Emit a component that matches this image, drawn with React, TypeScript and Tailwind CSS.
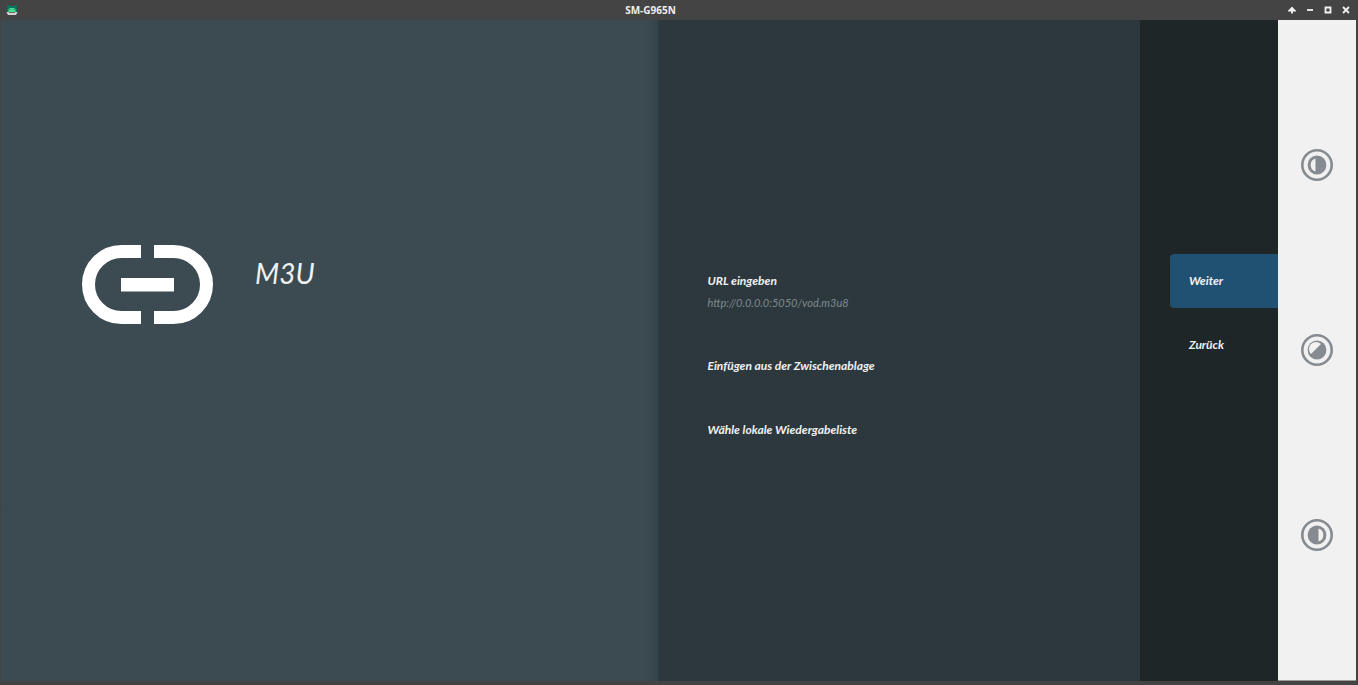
import type { ReactNode } from "react";

function Robot() {
  return (
    <svg viewBox="0 0 12 12" className="size-3 shrink-0" aria-hidden="true">
      <path d="M1 1h2l1 1h4l1-1h2v7H1z" fill="#0a7561" />
      <path d="M2.5 8V5.5L4 4h4l1.5 1.500V8z" fill="#48dd91" />
      <path d="M3.5 5h1v1h-1zM7.5 5h1v1h-1z" fill="#16845c" />
      <path d="M0.5 8h2l1 .8h5l1-.8h2l-1.500 3H2z" fill="#d3d3d3" />
    </svg>
  );
}

function LinkLogo() {
  return (
    <svg viewBox="0 0 131 79" className="h-[79px] w-[131px] shrink-0" fill="none" aria-hidden="true">
      <path d="M59 6.5H39.5a33 33 0 0 0 0 66H59M72 6.5h19.500a33 33 0 0 1 0 66H72" stroke="#fff" strokeWidth="13" />
      <path d="M39 33h53v13.500H39z" fill="#fff" />
    </svg>
  );
}

const titleButton = "flex h-5 w-[18px] items-center justify-center";

function WindowButton({ label, children }: { label: string; children: ReactNode }) {
  return (
    <button type="button" aria-label={label} className={titleButton}>
      <svg viewBox="0 0 8 8" className="size-2" fill="none" stroke="#f2f2f2" strokeWidth="1.800" aria-hidden="true">
        {children}
      </svg>
    </button>
  );
}

function DialButton({ label, light }: { label: string; light: string }) {
  return (
    <button type="button" aria-label={label} className="size-8 rounded-full">
      <svg viewBox="0 0 32 32" className="size-8" aria-hidden="true">
        <circle cx="16" cy="16" r="14.700" fill="none" stroke="#858b90" strokeWidth="2.600" />
        <circle cx="16" cy="16" r="9.400" fill="#858b90" />
        <path d={light} fill="#f1f1f1" />
      </svg>
    </button>
  );
}

const row = "flex flex-col justify-center text-left text-xs font-bold italic text-[#f0f2f2]";

export default function App() {
  return (
    <div className="flex h-screen min-h-[480px] flex-col bg-[#434343] font-['Lato','Noto_Sans',sans-serif]">
      <header className="flex h-5 shrink-0 items-center bg-[#444444] pl-1.5 pr-[3px]">
        <Robot />
        <h1 className="flex-1 text-center font-['Noto_Sans',sans-serif] text-[10px] leading-[18px] font-bold text-[#eeeeee]">
          SM-G965N
        </h1>
        <div className="flex">
          <WindowButton label="Keep above">
            <path d="M4 1v6.500M1.500 4.500L4 2l2.500 2.500z" fill="#f2f2f2" />
          </WindowButton>
          <WindowButton label="Minimize">
            <path d="M1 4h6" />
          </WindowButton>
          <WindowButton label="Maximize">
            <path d="M1.500 1.500h5v5h-5z" />
          </WindowButton>
          <WindowButton label="Close">
            <path d="M1 1l6 6M7 1L1 7" />
          </WindowButton>
        </div>
      </header>

      <div className="mr-0.5 mb-1 ml-px flex min-h-0 flex-1">
        <main className="grid min-w-0 flex-1 grid-cols-[656fr_482fr_138fr]">
          <section className="flex items-start gap-[42px] bg-linear-to-r from-[#3b4b51] from-98% to-[#35444a] pt-[225px] pl-[81px]">
            <LinkLogo />
            <h2 className="pt-3 text-[28px] leading-8 italic text-[#f0f2f2]">M3U</h2>
          </section>

          <section className="flex flex-col gap-2.5 bg-[#2c383e] pt-[234px] pl-[50px]">
            <button type="button" className={`${row} h-[75px] gap-1`}>
              <span className="leading-[18px]">URL eingeben</span>
              <span className="text-[11px] leading-[18px] font-normal text-[#7f898c]">http://0.0.0.0:5050/vod.m3u8</span>
            </button>
            <button type="button" className={`${row} h-[54px]`}>
              Einfügen aus der Zwischenablage
            </button>
            <button type="button" className={`${row} h-[54px]`}>
              Wähle lokale Wiedergabeliste
            </button>
          </section>

          <section className="flex flex-col gap-2.5 bg-[#1e2628] pt-[234px] pl-[30px]">
            <button type="button" className={`${row} h-[54px] rounded-l bg-[#215172] pl-[19px]`}>
              Weiter
            </button>
            <button type="button" className={`${row} h-[54px] pl-[19px]`}>
              Zurück
            </button>
          </section>
        </main>

        <nav className="flex w-[78px] shrink-0 flex-col items-center justify-around border-b border-[#999999] bg-[#f1f1f1] pt-[52px] pb-[53px]">
          <DialButton label="Recent apps" light="M14.500 9.500v13a6.800 6.800 0 0 1 0-13z" />
          <DialButton label="Home" light="M20 10L10 20a7 7 0 0 1 10-10z" />
          <DialButton label="Back" light="M17.500 9.500v13a6.800 6.800 0 0 0 0-13z" />
        </nav>
      </div>
    </div>
  );
}
